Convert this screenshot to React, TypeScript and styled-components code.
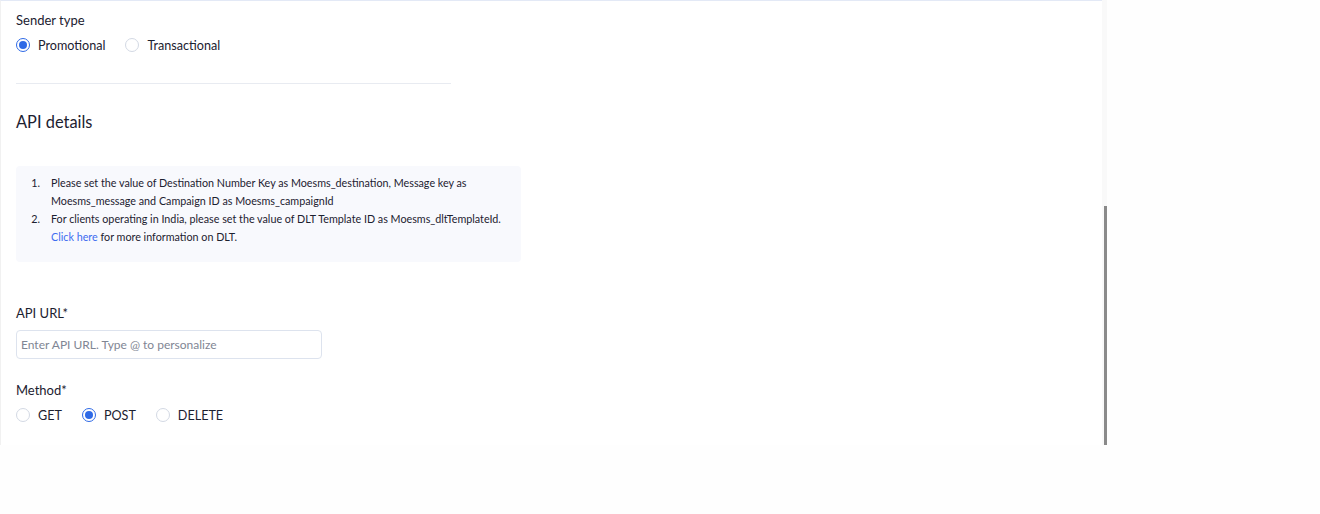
import React from "react";
import styled, { createGlobalStyle } from "styled-components";

const Global = createGlobalStyle`
  html, body { margin: 0; padding: 0; background: #ffffff; }
  body { font-family: Lato, "Open Sans", Arial, sans-serif; color: #1c2130; }
  * { box-sizing: border-box; }
`;

const Shell = styled.div`
  display: flex;
  width: 1320px;
  height: 514px;
  background: #fefefe;
`;

const Panel = styled.div`
  width: 1102px;
  height: 445px;
  background: #ffffff;
  border-top: 1px solid #e3e9f6;
  border-left: 1px solid #f1f1f1;
  overflow: hidden;
`;

const Track = styled.div`
  width: 5px;
  height: 445px;
  background: #f9f9f9;
  display: flex;
  flex-direction: column;
  align-items: flex-end;
`;

const Thumb = styled.div`
  margin-top: 206px;
  width: 3px;
  flex: 1;
  background: #8a8a8a;
`;

const Content = styled.div`
  padding: 10px 0 0 15px;
  display: flex;
  flex-direction: column;
`;

const Label = styled.div<{ $mt?: number }>`
  font-size: 13px;
  line-height: 18px;
  color: #1c2130;
  margin-top: ${(p) => p.$mt ?? 0}px;
`;

const RadioRow = styled.div<{ $gap: number }>`
  display: flex;
  align-items: center;
  gap: ${(p) => p.$gap}px;
  margin-top: 8px;
  height: 16px;
`;

const RadioItem = styled.label`
  display: flex;
  align-items: center;
  gap: 8px;
  font-size: 12.6px;
  color: #1c2130;
  cursor: pointer;
`;

const Circle = styled.span<{ $on?: boolean }>`
  width: 14px;
  height: 14px;
  border-radius: 50%;
  border: 1px solid ${(p) => (p.$on ? "#2f6ae6" : "#d3d9e4")};
  background: #fff;
  display: inline-flex;
  align-items: center;
  justify-content: center;
  &::after {
    content: "";
    width: 8px;
    height: 8px;
    border-radius: 50%;
    background: ${(p) => (p.$on ? "#2f6ae6" : "transparent")};
  }
`;

const Divider = styled.div`
  width: 435px;
  height: 1px;
  background: #e8ebf1;
  margin-top: 30px;
`;

const Heading = styled.h2`
  margin: 28px 0 0;
  font-size: 16.4px;
  line-height: 20px;
  font-weight: 400;
  color: #1c2130;
`;

const InfoBox = styled.div`
  margin-top: 34px;
  width: 505px;
  height: 96px;
  background: #f8f9fd;
  border-radius: 4px;
  padding: 8px 0 0 0;
`;

const InfoList = styled.ol`
  margin: 0;
  padding-left: 35px;
  font-size: 10.75px;
  line-height: 18px;
  color: #1c2130;
  li::marker { content: counter(list-item) ".    "; }
`;

const Link = styled.a`
  color: #3d6cf0;
  text-decoration: none;
`;

const Input = styled.input`
  margin-top: 8px;
  width: 306px;
  height: 29px;
  border: 1px solid #dde3ee;
  border-radius: 4px;
  padding: 0 4px;
  font-family: inherit;
  font-size: 12px;
  color: #1c2130;
  outline: none;
  &::placeholder { color: #7f8694; }
`;

function Radio({ label, on }: { label: string; on?: boolean }) {
  return (
    <RadioItem>
      <Circle $on={on} />
      {label}
    </RadioItem>
  );
}

export default function App() {
  return (
    <>
      <Global />
      <Shell>
        <Panel>
          <Content>
            <Label>Sender type</Label>
            <RadioRow $gap={20}>
              <Radio label="Promotional" on />
              <Radio label="Transactional" />
            </RadioRow>
            <Divider />
            <Heading>API details</Heading>
            <InfoBox>
              <InfoList>
                <li>
                  Please set the value of Destination Number Key as Moesms_destination, Message key as
                  <br />
                  Moesms_message and Campaign ID as Moesms_campaignId
                </li>
                <li>
                  For clients operating in India, please set the value of DLT Template ID as Moesms_dltTemplateId.
                  <br />
                  <Link href="#">Click here</Link> for more information on DLT.
                </li>
              </InfoList>
            </InfoBox>
            <Label $mt={42}>API URL*</Label>
            <Input placeholder="Enter API URL. Type @ to personalize" />
            <Label $mt={22}>Method*</Label>
            <RadioRow $gap={20}>
              <Radio label="GET" />
              <Radio label="POST" on />
              <Radio label="DELETE" />
            </RadioRow>
          </Content>
        </Panel>
        <Track>
          <Thumb />
        </Track>
      </Shell>
    </>
  );
}
